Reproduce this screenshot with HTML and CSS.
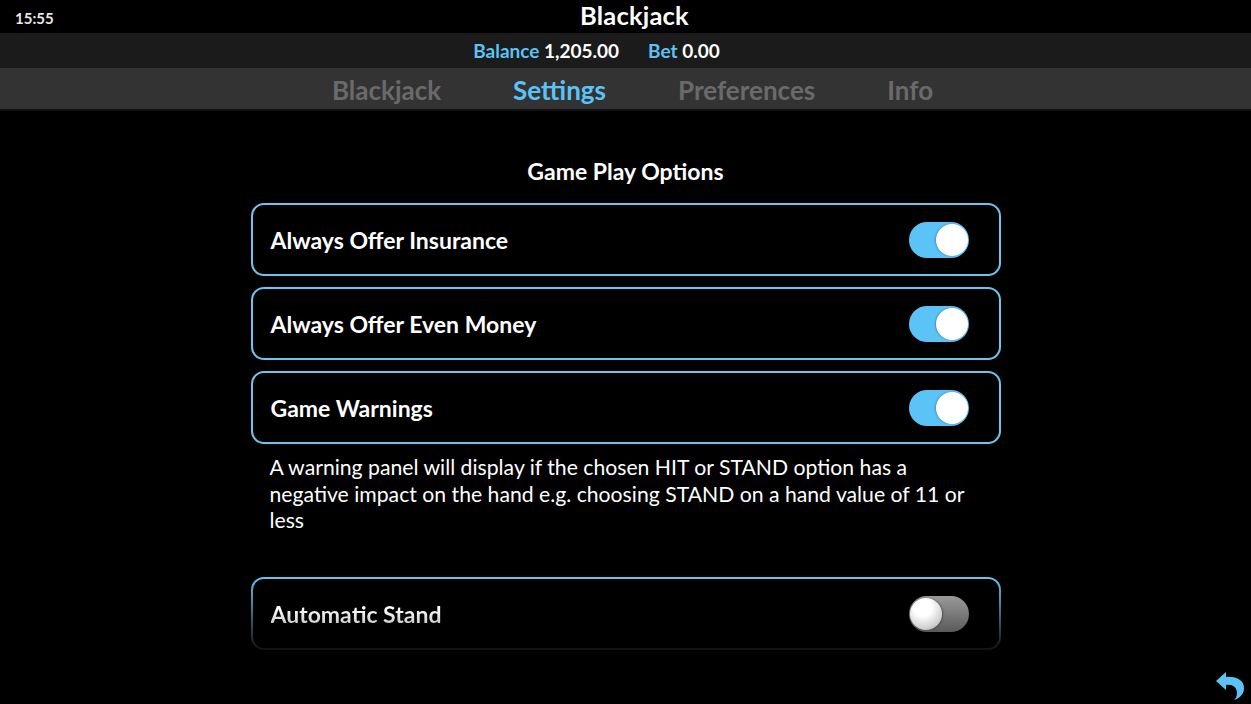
FILE: index.html
```html
<!DOCTYPE html>
<html>
<head>
<meta charset="utf-8">
<link rel="stylesheet" href="styles.css">
</head>
<body>
<div class="app">
  <header class="topbar">
    <span class="clock">15:55</span>
    <span class="title">Blackjack</span>
  </header>
  <div class="balancebar">
    <span><span class="lbl">Balance</span> 1,205.00</span>
    <span><span class="lbl">Bet</span> 0.00</span>
  </div>
  <nav class="tabs">
    <span class="tab">Blackjack</span>
    <span class="tab active">Settings</span>
    <span class="tab">Preferences</span>
    <span class="tab">Info</span>
  </nav>
  <main class="content">
    <h2 class="heading">Game Play Options</h2>
    <div class="row">
      <span class="label">Always Offer Insurance</span>
      <span class="toggle on"><span class="knob"></span></span>
    </div>
    <div class="row">
      <span class="label">Always Offer Even Money</span>
      <span class="toggle on"><span class="knob"></span></span>
    </div>
    <div class="row">
      <span class="label">Game Warnings</span>
      <span class="toggle on"><span class="knob"></span></span>
    </div>
    <p class="desc">A warning panel will display if the chosen HIT or STAND option has a negative impact on the hand e.g. choosing STAND on a hand value of 11 or less</p>
    <div class="row fade">
      <span class="label grad">Automatic Stand</span>
      <span class="toggle off"><span class="knob"></span></span>
    </div>
  </main>
  <svg class="back" width="30" height="32" viewBox="0 0 30 32">
    <path d="M11 3 L1 12 L11 21 L11 16 C17 15 22 18 22 24 C22 27 21 29 19 31 C25 29 29 25 29 19 C29 11 21 7 11 8 Z" fill="#5cc3f6"/>
  </svg>
</div>
</body>
</html>
```
FILE: styles.css
```css
* { box-sizing: border-box; margin: 0; padding: 0; }
html, body { background: #000; }
body { font-family: "Lato", "Open Sans", sans-serif; color: #fff; width: 1251px; height: 704px; overflow: hidden; }
.app { position: relative; width: 1251px; height: 704px; display: flex; flex-direction: column; }
.topbar { height: 33px; position: relative; display: flex; align-items: center; justify-content: center; background: #000; padding-left: 18px; }
.clock { position: absolute; left: 15px; top: 9px; font-size: 15px; font-weight: 700; color: #e8e8e8; }
.title { font-size: 25.5px; font-weight: 700; letter-spacing: 0.2px; margin-top: -3px; }
.balancebar { height: 35px; background: #1b1b1b; display: flex; justify-content: center; align-items: center; gap: 29px; font-size: 19px; font-weight: 700; padding-right: 58px; }
.lbl { color: #5cc3f6; }
.tabs { height: 43px; background: #333; border-bottom: 2px solid #111; display: flex; justify-content: center; align-items: center; gap: 72px; padding-left: 14px; padding-top: 2px; }
.tab { font-size: 26px; font-weight: 700; color: #6a6a6a; }
.tab.active { color: #5cc3f6; }
.content { width: 750px; margin: 0 auto; padding-top: 47px; display: flex; flex-direction: column; }
.heading { text-align: center; font-size: 23px; font-weight: 700; height: 27px; line-height: 27px; margin-bottom: 18px; }
.row { height: 73px; border: 2px solid #6cc4ef; border-radius: 13px; display: flex; align-items: center; justify-content: space-between; padding: 0 30px 0 18px; margin-bottom: 11px; }
.label { font-size: 23px; font-weight: 700; }
.toggle { width: 60px; height: 36px; border-radius: 18px; position: relative; display: block; }
.toggle.on { background: #5cc3f6; }
.toggle.on .knob { position: absolute; right: 1px; top: 2px; width: 32px; height: 32px; border-radius: 50%; background: #fff; box-shadow: -1px 0 2px rgba(0,0,0,0.25); }
.toggle.off { background: linear-gradient(#9a9a9a, #5a5a5a); }
.toggle.off .knob { position: absolute; left: 1px; top: 2px; width: 32px; height: 32px; border-radius: 50%; background: radial-gradient(circle at 40% 30%, #fff 30%, #cfcfcf 70%, #9a9a9a); box-shadow: 1px 0 2px rgba(0,0,0,0.35); }
.desc { font-size: 21.2px; line-height: 26.5px; padding: 0 20px 0 19px; margin-top: -1px; height: 123px; }
.row.fade { border-color: transparent; background: linear-gradient(#000, #000) padding-box, linear-gradient(#6cc4ef 0%, #3a6a85 50%, #111 100%) border-box; }
.grad { background: linear-gradient(#fff 30%, #bdbdbd 100%); -webkit-background-clip: text; background-clip: text; color: transparent; }
.back { position: absolute; right: 6px; bottom: 3px; }
```
